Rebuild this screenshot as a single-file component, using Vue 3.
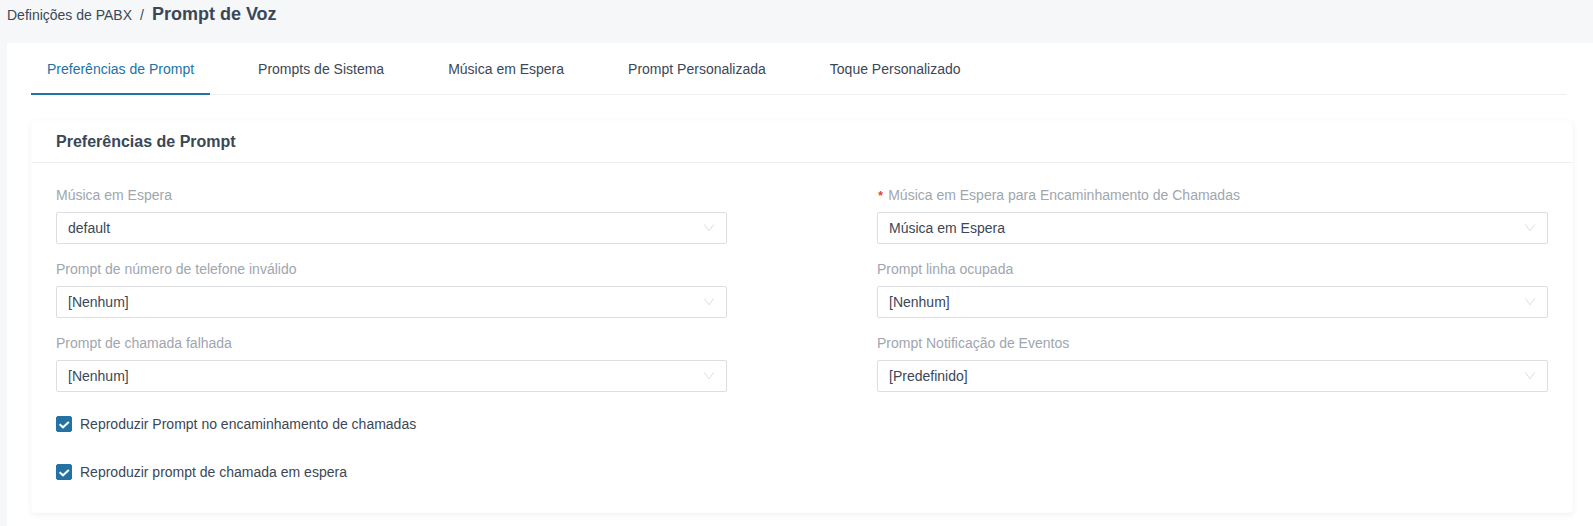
<script setup>
import { ref, reactive } from 'vue'

const tabs = [
  'Preferências de Prompt',
  'Prompts de Sistema',
  'Música em Espera',
  'Prompt Personalizada',
  'Toque Personalizado',
]
const activeTab = ref(0)

const fields = reactive([
  { id: 'moh', label: 'Música em Espera', value: 'default', options: ['default'] },
  {
    id: 'forward-moh',
    label: 'Música em Espera para Encaminhamento de Chamadas',
    value: 'Música em Espera',
    options: ['Música em Espera'],
    required: true,
  },
  { id: 'invalid', label: 'Prompt de número de telefone inválido', value: '[Nenhum]', options: ['[Nenhum]'] },
  { id: 'busy', label: 'Prompt linha ocupada', value: '[Nenhum]', options: ['[Nenhum]'] },
  { id: 'failed', label: 'Prompt de chamada falhada', value: '[Nenhum]', options: ['[Nenhum]'] },
  { id: 'event', label: 'Prompt Notificação de Eventos', value: '[Predefinido]', options: ['[Predefinido]'] },
])

const checks = reactive([
  { id: 'play-forward', label: 'Reproduzir Prompt no encaminhamento de chamadas', on: true },
  { id: 'play-waiting', label: 'Reproduzir prompt de chamada em espera', on: true },
])
</script>

<template>
  <div class="page">
    <header class="crumbs">
      <a href="#" class="crumb">Definições de PABX</a>
      <span class="slash">/</span>
      <h1 class="title">Prompt de Voz</h1>
    </header>

    <main class="panel">
      <nav class="tabs" role="tablist">
        <button
          v-for="(tab, i) in tabs"
          :key="tab"
          type="button"
          role="tab"
          class="tab"
          :class="{ active: i === activeTab }"
          :aria-selected="i === activeTab"
          @click="activeTab = i"
        >{{ tab }}</button>
      </nav>

      <section class="card">
        <h2 class="card-title">Preferências de Prompt</h2>
        <form class="card-body" @submit.prevent>
          <div class="grid">
            <div v-for="f in fields" :key="f.id" class="field">
              <label :for="f.id" class="label"><span v-if="f.required" class="star">*</span>{{ f.label }}</label>
              <div class="control">
                <select :id="f.id" v-model="f.value" class="select" :required="f.required">
                  <option v-for="o in f.options" :key="o">{{ o }}</option>
                </select>
                <svg class="arrow" viewBox="0 0 12 12" aria-hidden="true">
                  <path d="M1.2 2.4 6 8.8l4.8-6.4" />
                </svg>
              </div>
            </div>
          </div>
          <div class="checks">
            <label v-for="c in checks" :key="c.id" :for="c.id" class="check">
              <span class="tick">
                <input :id="c.id" v-model="c.on" type="checkbox" class="box" />
                <svg v-if="c.on" class="mark" viewBox="0 0 16 16" aria-hidden="true">
                  <path d="M3.6 8.2 7 11.3 12.8 6" />
                </svg>
              </span>
              {{ c.label }}
            </label>
          </div>
        </form>
      </section>
    </main>
  </div>
</template>

<style>
body {
  background: #f6f7f9;
}
</style>

<style scoped>
.page {
  display: flex;
  flex-direction: column;
  min-height: 100vh;
  box-sizing: border-box;
  padding-left: 7px;
  background: #f6f7f9;
  color: #3b4757;
  font: 14px/24px "Liberation Sans", Arial, sans-serif;
}
.crumbs {
  display: flex;
  align-items: baseline;
  height: 43px;
}
.crumb {
  color: inherit;
  text-decoration: none;
}
.slash {
  margin: 0 8px;
}
.title {
  margin: 0;
  font-size: 18px;
  line-height: 28px;
  font-weight: 700;
}
.panel {
  flex: 1;
  padding: 0 20px 13px 24px;
  background: #fff;
}
.tabs {
  display: flex;
  gap: 32px;
  margin-right: 6px;
  border-bottom: 1px solid #eeeff1;
}
.tab {
  margin: 0 0 -1px;
  padding: 14px 16px 12px;
  border: 0;
  border-bottom: 2px solid transparent;
  background: none;
  color: inherit;
  font: inherit;
  cursor: pointer;
}
.tab.active {
  color: #2273a4;
  border-bottom-color: #2273a4;
}
.card {
  margin-top: 25px;
  border: 1px solid #fdfdfd;
  border-radius: 4px;
  background: #fff;
  box-shadow: 0 2px 6px rgba(0, 0, 0, 0.06);
}
.card-title {
  margin: 0;
  padding: 9px 24px 8px;
  border-bottom: 1px solid #eeeff1;
  font-size: 16px;
  line-height: 24px;
  font-weight: 700;
}
.card-body {
  padding: 20px 24px 28px;
}
.grid {
  display: grid;
  grid-template-columns: 1fr 1fr;
  gap: 13px 150px;
}
.field {
  display: flex;
  flex-direction: column;
  gap: 5px;
}
.label {
  color: #a0a6ae;
}
.star {
  margin-right: 4px;
  color: #e5432d;
  font: 700 12px/12px "Liberation Mono", "Courier New", monospace;
}
.control {
  display: grid;
  align-items: center;
}
.select {
  grid-area: 1 / 1;
  appearance: none;
  width: 100%;
  height: 32px;
  box-sizing: border-box;
  margin: 0;
  padding: 0 32px 0 11px;
  border: 1px solid #dcdee2;
  border-radius: 2px;
  background: #fff;
  color: inherit;
  font: inherit;
}
.arrow {
  grid-area: 1 / 1;
  justify-self: end;
  width: 12px;
  height: 12px;
  margin-right: 12px;
  fill: none;
  stroke: #dcdee2;
  stroke-width: 1;
  pointer-events: none;
}
.checks {
  display: flex;
  flex-direction: column;
  align-items: flex-start;
  gap: 24px;
  margin-top: 20px;
}
.check {
  display: flex;
  align-items: center;
  gap: 8px;
}
.tick {
  display: grid;
  width: 16px;
  height: 16px;
}
.box {
  grid-area: 1 / 1;
  appearance: none;
  width: 16px;
  height: 16px;
  box-sizing: border-box;
  margin: 0;
  border: 1px solid #dcdee2;
  border-radius: 2px;
  background: #fff;
}
.box:checked {
  border-color: #2273a4;
  background: #2273a4;
}
.mark {
  grid-area: 1 / 1;
  width: 16px;
  height: 16px;
  fill: none;
  stroke: #fff;
  stroke-width: 2;
  pointer-events: none;
}
</style>
